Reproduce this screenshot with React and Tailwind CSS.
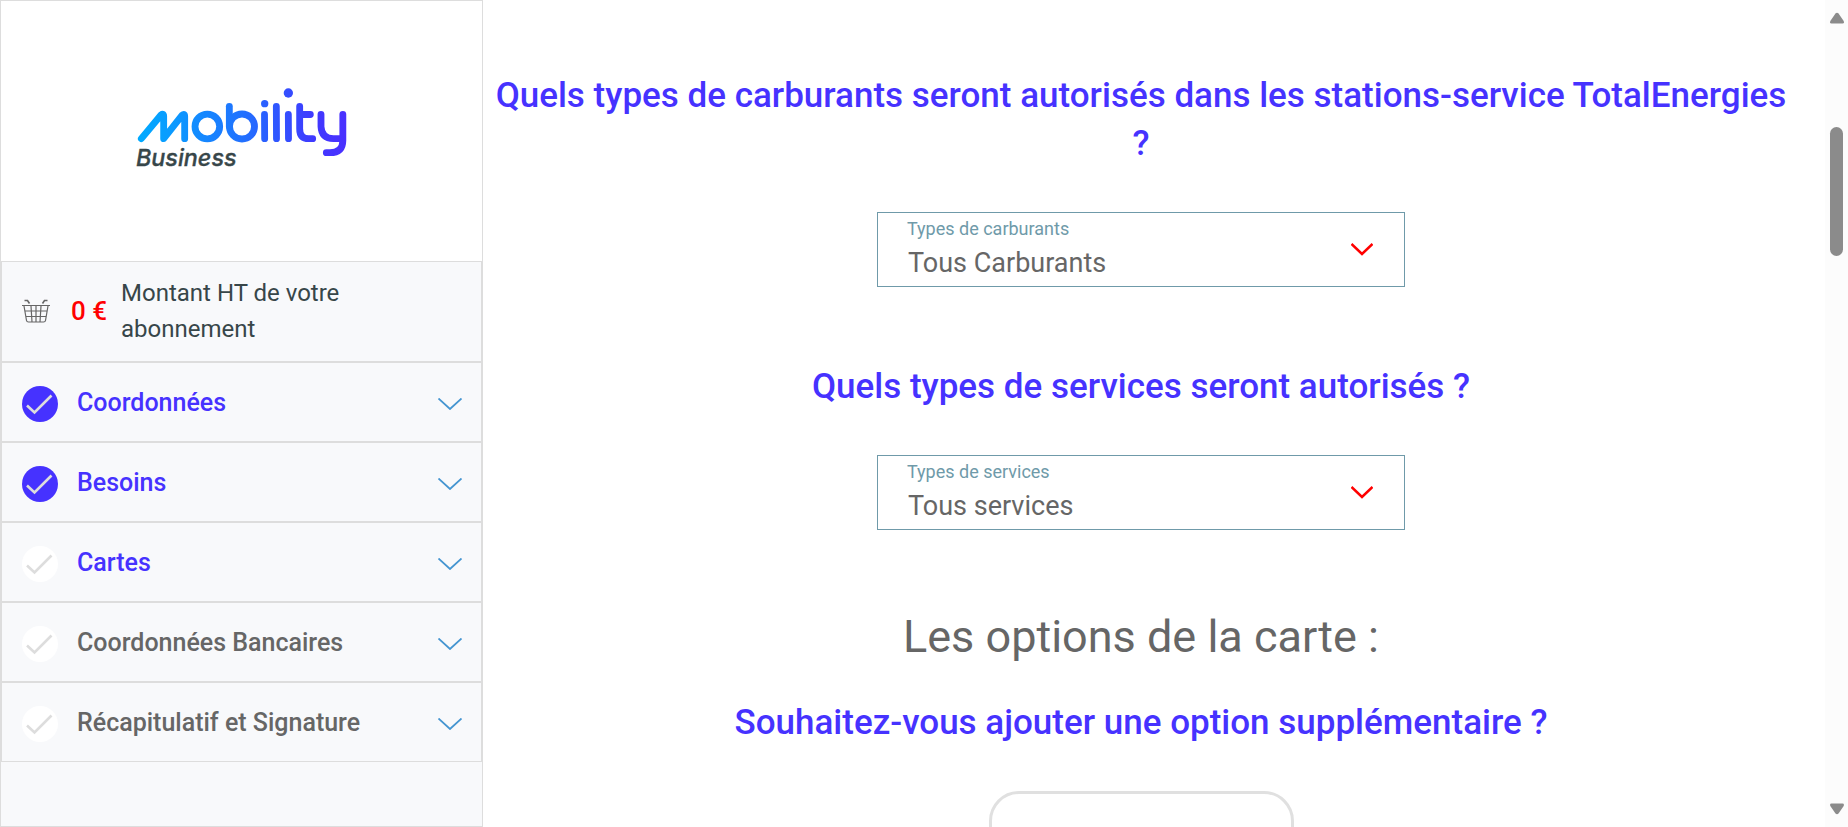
import React from "react";

const steps = [
  { label: "Coordonnées", done: true, reached: true },
  { label: "Besoins", done: true, reached: true },
  { label: "Cartes", done: false, reached: true },
  { label: "Coordonnées Bancaires", done: false, reached: false },
  { label: "Récapitulatif et Signature", done: false, reached: false },
];

function Logo() {
  return (
    <svg viewBox="48 54 633 252" className="h-21 w-[211px]" role="img" aria-label="Mobility Business">
      <defs>
        <linearGradient id="brand" gradientUnits="userSpaceOnUse" x1="54" y1="0" x2="679" y2="0">
          <stop offset="0" stopColor="#00aaff" />
          <stop offset="0.15" stopColor="#0a9cff" />
          <stop offset="0.5" stopColor="#2171ff" />
          <stop offset="0.85" stopColor="#4038ff" />
          <stop offset="1" stopColor="#4a30ff" />
        </linearGradient>
      </defs>
      <g fill="none" stroke="url(#brand)" strokeWidth="20.5" strokeLinecap="round" strokeLinejoin="round">
        <path d="M64 206 L123 135 Q131 129 131 139 V206 L186 136 Q194 129 194 139 V206" />
        <circle cx="262" cy="169.500" r="37" />
        <path d="M328 109 V169.500" />
        <circle cx="366" cy="169.500" r="37.500" />
        <path d="M433.500 133 L434 206" />
        <path d="M469 109 L469.500 206" />
        <path d="M505 133 L505.500 206" />
        <path d="M539 109 V176 Q539 206 566 206 H578 M539 133.500 H571" />
        <path d="M603 133 V170 Q605 206 640 206 H668 M668.500 133 V212 Q668 248 630 248 H619" />
      </g>
      <circle cx="434" cy="101" r="11" fill="url(#brand)" />
      <circle cx="505" cy="69" r="14" fill="url(#brand)" />
      <text x="48" y="288" fontFamily="Inter, sans-serif" fontStyle="italic" fontWeight="500" fontSize="70" fill="#374649" stroke="#374649" strokeWidth="1">
        Business
      </text>
    </svg>
  );
}

function BasketIcon() {
  return (
    <svg viewBox="0 0 28 24" className="h-6 w-7 shrink-0" fill="none" stroke="#666" strokeWidth="1.2" aria-hidden="true">
      <path d="M0 6.500H28M2 7L4.500 21.500Q4.800 23 6.500 23H21.500Q23.200 23 23.500 21.500L26 7M3 12H25M4 17.500H24M9 7L10 23M14 7V23M19 7L18 23" />
      <path strokeWidth="1.600" d="M2.500 1.500H5.500L7.500 4.500M25.500 1.500H22.500L20.500 4.500" />
    </svg>
  );
}

function Step({ label, done, reached }) {
  return (
    <li className="border border-[#ddd]">
      <button type="button" className="flex h-[78px] w-full items-center pt-0.5 pr-[19px] pl-5 text-left">
        <svg viewBox="0 0 36 36" className="mt-0.5 size-9 shrink-0" aria-hidden="true">
          <circle cx="18" cy="18" r="18" fill={done ? "#4632ff" : "#fff"} />
          <path d="M5 19.500L12.500 26.500L29.500 9.500" fill="none" stroke="#ddd" strokeWidth="2.600" />
        </svg>
        <span
          className={
            reached
              ? "ml-[19px] flex-1 text-[25px] leading-8 font-medium text-[#4632ff]"
              : "ml-[19px] flex-1 text-[25px] leading-8 font-medium text-[#666]"
          }
        >
          {label}
        </span>
        <svg viewBox="0 0 24 12" className="mt-0.5 h-3 w-6" fill="none" stroke="#4495d1" strokeWidth="1.800" aria-hidden="true">
          <path d="M0.500 0.500L12 11L23.500 0.500" />
        </svg>
      </button>
    </li>
  );
}

function SelectField({ id, label, value }) {
  return (
    <div className="mx-auto grid h-[75px] w-[528px] max-w-full border border-[#6f9aa9] text-left">
      <label htmlFor={id} className="pointer-events-none z-10 col-start-1 row-start-1 self-start pt-1 pl-[29px] text-lg leading-6 text-[#6f9aa9]">
        {label}
      </label>
      <select
        id={id}
        className="col-start-1 row-start-1 w-full appearance-none bg-transparent pt-[26px] pr-20 pl-[30px] text-[27px] leading-8 text-[#666] outline-none"
      >
        <option>{value}</option>
      </select>
      <svg viewBox="0 0 22 13" className="pointer-events-none col-start-1 row-start-1 mr-[31px] h-[13px] w-[22px] self-center justify-self-end" fill="none" stroke="#f00" strokeWidth="2.500" aria-hidden="true">
        <path d="M0.500 1L11 11L21.500 1" />
      </svg>
    </div>
  );
}

export default function App() {
  return (
    <div className="flex h-screen overflow-hidden bg-white font-['Roboto',sans-serif]">
      <aside className="flex w-[483px] shrink-0 flex-col border border-[#ddd] bg-[#f8f9fb]">
        <div className="flex h-[260px] items-center justify-center bg-white pb-0.5">
          <Logo />
        </div>
        <div className="flex h-[101px] items-center border border-[#ddd] pb-0.5 pl-5">
          <BasketIcon />
          <strong className="ml-[21px] text-[26px] leading-9 font-medium text-[#f00]">0 €</strong>
          <p className="ml-3.5 w-60 text-2xl leading-9 text-[#374649]">Montant HT de votre abonnement</p>
        </div>
        <ul>
          {steps.map((s) => (
            <Step key={s.label} {...s} />
          ))}
        </ul>
      </aside>

      <main className="min-w-0 flex-1 overflow-hidden pt-[72px] pr-9 pl-[10px] text-center">
        <h2 className="text-[35px] leading-12 font-medium text-[#4632ff]">
          Quels types de carburants seront autorisés dans les stations-service TotalEnergies ?
        </h2>
        <div className="mt-11">
          <SelectField id="fuel" label="Types de carburants" value="Tous Carburants" />
        </div>
        <h2 className="mt-19 text-[35px] leading-12 font-medium text-[#4632ff]">
          Quels types de services seront autorisés ?
        </h2>
        <div className="mt-11">
          <SelectField id="services" label="Types de services" value="Tous services" />
        </div>
        <h1 className="mt-[75px] text-[45px] leading-16 text-[#666]">Les options de la carte :</h1>
        <h2 className="mt-[30px] text-[35px] leading-12 font-medium text-[#4632ff]">
          Souhaitez-vous ajouter une option supplémentaire ?
        </h2>
        <div className="mx-auto mt-11 h-80 w-[305px] rounded-[30px] border-3 border-[#e0e0e0]" />
      </main>

      <div className="flex w-[23px] shrink-0 flex-col items-center justify-between bg-[#fcfcfc] py-3" aria-hidden="true">
        <div className="flex flex-col items-center">
          <svg viewBox="0 0 14 12" className="h-3 w-3.5" fill="#8b8b8b">
            <path d="M5.500 1.500Q7 0 8.500 1.500L13.700 9Q14.500 11.500 12.500 11.500H1.500Q-.5 11.500 .3 9Z" />
          </svg>
          <div className="mt-[103px] h-[129px] w-[13px] rounded-full bg-[#8b8b8b]" />
        </div>
        <svg viewBox="0 0 14 12" className="h-3 w-3.5" fill="#8b8b8b">
          <path d="M5.500 10.500Q7 12 8.500 10.500L13.700 3Q14.500 .5 12.500 .5H1.500Q-.5 .5 .3 3Z" />
        </svg>
      </div>
    </div>
  );
}
